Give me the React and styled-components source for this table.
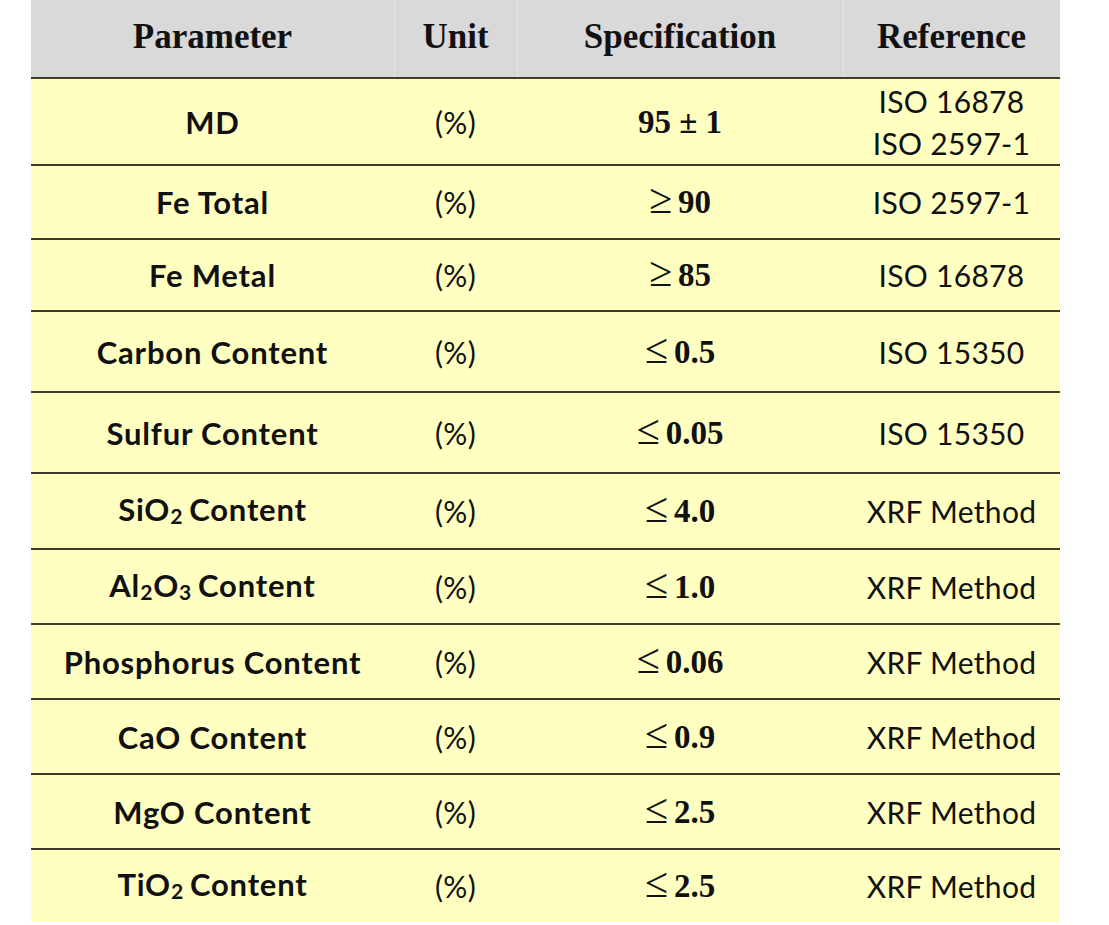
import React from 'react'
import styled, { createGlobalStyle } from 'styled-components'

const GlobalStyle = createGlobalStyle`
  html, body {
    margin: 0;
    padding: 0;
    background: #ffffff;
  }
  body {
    font-family: Lato, "Liberation Sans", sans-serif;
    color: #111111;
  }
`

const Page = styled.div`
  padding: 0 49px 3px 31px;
`

const Table = styled.div`
  width: 1029px;
  display: grid;
  grid-template-columns: 363px 123px 326px 217px;
`

const HeadCell = styled.div`
  height: 77px;
  box-sizing: border-box;
  padding-bottom: 4px;
  background: #d9d9d9;
  display: flex;
  align-items: center;
  justify-content: center;
  font-family: "Liberation Serif", "Times New Roman", serif;
  font-weight: 700;
  font-size: 35px;
  color: #111;
  box-shadow: inset 1px 0 0 rgba(255, 255, 255, 0.35);
  &:first-child {
    box-shadow: none;
  }
`

const Cell = styled.div`
  height: ${(p) => p.$h}px;
  box-sizing: border-box;
  border-top: 2px solid #3e3d2c;
  background: #ffffc2;
  display: flex;
  flex-direction: column;
  align-items: center;
  justify-content: center;
  text-align: center;
  font-size: ${(p) => (p.$bold ? 31 : 30)}px;
  font-weight: ${(p) => (p.$bold ? 700 : 400)};
  letter-spacing: ${(p) => (p.$bold ? 0.8 : 0.3)}px;
  line-height: 42px;
`

const Spec = styled(Cell)`
  font-family: "Liberation Serif", "Times New Roman", serif;
  font-weight: 700;
  font-size: 33px;
  letter-spacing: 0;
`

const Sym = styled.span`
  font-weight: 400;
  font-size: 1.28em;
  line-height: 0;
  margin-right: 6px;
`

const Sub = styled.span`
  font-size: 0.68em;
  position: relative;
  top: 0.16em;
  margin-right: ${(p) => (p.$tight ? 0 : 6)}px;
`

const rows = [
  { name: 'MD', spec: [null, '95 ± 1'], ref: ['ISO 16878', 'ISO 2597-1'], h: 87 },
  { name: 'Fe Total', spec: ['≥', '90'], ref: ['ISO 2597-1'], h: 74 },
  { name: 'Fe Metal', spec: ['≥', '85'], ref: ['ISO 16878'], h: 72 },
  { name: 'Carbon Content', spec: ['≤', '0.5'], ref: ['ISO 15350'], h: 81 },
  { name: 'Sulfur Content', spec: ['≤', '0.05'], ref: ['ISO 15350'], h: 81 },
  { name: ['SiO', '2', 'Content'], spec: ['≤', '4.0'], ref: ['XRF Method'], h: 76 },
  { name: ['Al', '2', 'O', '3', 'Content'], spec: ['≤', '1.0'], ref: ['XRF Method'], h: 75 },
  { name: 'Phosphorus Content', spec: ['≤', '0.06'], ref: ['XRF Method'], h: 75 },
  { name: 'CaO Content', spec: ['≤', '0.9'], ref: ['XRF Method'], h: 75 },
  { name: 'MgO Content', spec: ['≤', '2.5'], ref: ['XRF Method'], h: 75 },
  { name: ['TiO', '2', 'Content'], spec: ['≤', '2.5'], ref: ['XRF Method'], h: 74 },
]

function Name({ value }) {
  if (typeof value === 'string') return value
  if (value.length === 3) {
    return (
      <span>
        {value[0]}
        <Sub>{value[1]}</Sub>
        {value[2]}
      </span>
    )
  }
  return (
    <span>
      {value[0]}
      <Sub $tight>{value[1]}</Sub>
      {value[2]}
      <Sub>{value[3]}</Sub>
      {value[4]}
    </span>
  )
}

export default function App() {
  return (
    <Page>
      <GlobalStyle />
      <Table>
        <HeadCell>Parameter</HeadCell>
        <HeadCell>Unit</HeadCell>
        <HeadCell>Specification</HeadCell>
        <HeadCell>Reference</HeadCell>
        {rows.map((r, i) => (
          <React.Fragment key={i}>
            <Cell $h={r.h} $bold>
              <Name value={r.name} />
            </Cell>
            <Cell $h={r.h}>(%)</Cell>
            <Spec $h={r.h}>
              <span>
                {r.spec[0] && <Sym>{r.spec[0]}</Sym>}
                {r.spec[1]}
              </span>
            </Spec>
            <Cell $h={r.h}>
              {r.ref.map((line) => (
                <div key={line}>{line}</div>
              ))}
            </Cell>
          </React.Fragment>
        ))}
      </Table>
    </Page>
  )
}
